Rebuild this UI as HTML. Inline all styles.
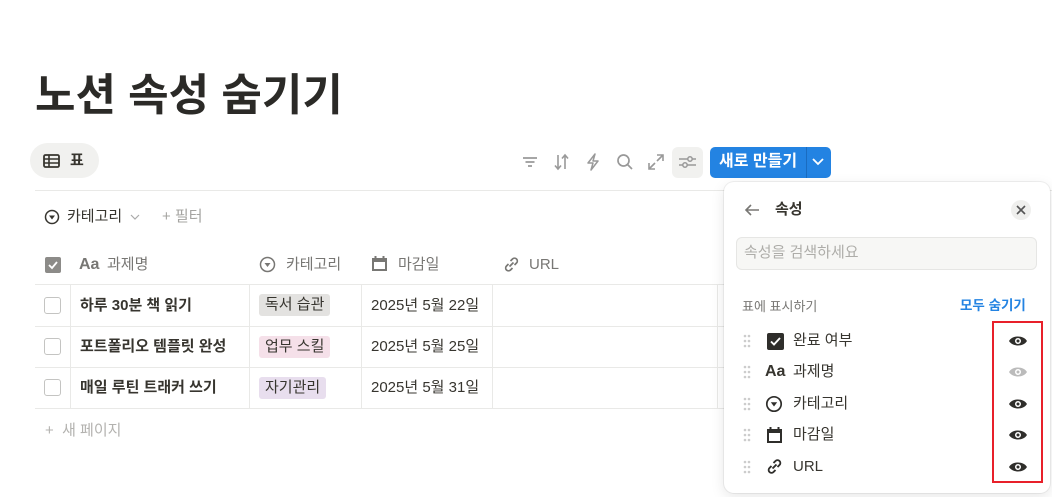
<!DOCTYPE html>
<html><head><meta charset="utf-8"><style>
*{margin:0;padding:0;box-sizing:border-box}
body{width:1052px;height:497px;overflow:hidden;background:#fff;font-family:"Liberation Sans","Noto Sans CJK KR",sans-serif;color:#37352f;position:relative}
.a{position:absolute}
.t{font-size:15px;line-height:20px;white-space:nowrap}
.g{color:#787774}
.vl{position:absolute;width:1px;background:#e9e9e7}
.hl{position:absolute;height:1px;background:#e9e9e7}
.cb{position:absolute;width:17px;height:17px;border:1.5px solid #c4c4c2;border-radius:3px;left:44px}
.tag{position:absolute;height:22px;padding:0 6px;border-radius:3px;font-size:15px;line-height:22px}
.eye{position:absolute;left:1008px}
</style></head><body>
<div class="a" style="left:35px;top:66px;font-size:44px;font-weight:700;line-height:60px;color:#2b2a27">노션 속성 숨기기</div>

<div class="a" style="left:30px;top:143px;width:69px;height:35px;border-radius:18px;background:#f1f1ef"></div>
<svg class="a" style="left:43px;top:154px" width="17" height="14" viewBox="0 0 17 14"><rect x="1" y="1" width="15" height="12" rx="1.5" fill="none" stroke="#37352f" stroke-width="1.8"/><path d="M1 5h15M1 9h15M6 1v12" stroke="#37352f" stroke-width="1.6"/></svg>
<div class="a t" style="left:70px;top:151px;font-weight:700">표</div>

<!-- toolbar -->
<svg class="a" style="left:521px;top:154px" width="18" height="16"><path d="M2 4h14M4.5 8h9M7 12h4" stroke="#999" stroke-width="1.7"/></svg>
<svg class="a" style="left:553px;top:153px" width="18" height="18"><path d="M5 2v14M2 12.5l3 3.5 3-3.5M12 16V2M9 5.5L12 2l3 3.5" stroke="#999" stroke-width="1.6" fill="none"/></svg>
<svg class="a" style="left:585px;top:153px" width="16" height="18"><path d="M10 1L3 10h5l-2 7 7-9H8z" stroke="#999" stroke-width="1.5" fill="none" stroke-linejoin="round"/></svg>
<svg class="a" style="left:616px;top:153px" width="18" height="18"><circle cx="7.5" cy="7.5" r="5.5" stroke="#999" stroke-width="1.7" fill="none"/><path d="M11.5 11.5l4.5 4.5" stroke="#999" stroke-width="1.7"/></svg>
<svg class="a" style="left:647px;top:153px" width="18" height="18"><path d="M2 16l6-6M2 10v6h6M16 2l-6 6M10 2h6v6" stroke="#999" stroke-width="1.6" fill="none"/></svg>
<div class="a" style="left:672px;top:147px;width:31px;height:31px;border-radius:6px;background:#f1f1ef"></div>
<svg class="a" style="left:678px;top:153px" width="19" height="18"><path d="M1 6h17M1 12h17" stroke="#999" stroke-width="1.5"/><circle cx="12" cy="6" r="2.2" fill="#f1f1ef" stroke="#999" stroke-width="1.5"/><circle cx="7" cy="12" r="2.2" fill="#f1f1ef" stroke="#999" stroke-width="1.5"/></svg>
<div class="a" style="left:710px;top:147px;width:121px;height:31px;border-radius:5px;background:#2383e2"></div>
<div class="a" style="left:806px;top:147px;width:1px;height:31px;background:#1a6cc0"></div>
<div class="a t" style="left:719px;top:152px;color:#fff;font-weight:700;font-size:16px">새로 만들기</div>
<svg class="a" style="left:811px;top:157px" width="14" height="10"><path d="M2 2l5 5 5-5" stroke="#fff" stroke-width="1.8" fill="none"/></svg>

<div class="hl" style="left:35px;top:190px;width:1017px"></div>

<!-- filter row -->
<svg class="a" style="left:44px;top:209px" width="16" height="16"><circle cx="8" cy="8" r="6.5" stroke="#37352f" stroke-width="1.5" fill="none"/><path d="M5 6.5h6L8 10.5z" fill="#37352f"/></svg>
<div class="a t" style="left:67px;top:207px">카테고리</div>
<svg class="a" style="left:130px;top:213px" width="10" height="8"><path d="M1 2l4 4 4-4" stroke="#aaa" stroke-width="1.2" fill="none"/></svg>
<div class="a t" style="left:162px;top:207px;color:#a5a4a1">+ 필터</div>

<!-- header -->
<div class="a" style="left:45px;top:257px;width:16px;height:16px;background:#8c8b88;border-radius:2px"></div>
<svg class="a" style="left:45px;top:257px" width="16" height="16"><path d="M4 8l3 3 5-6" stroke="#fff" stroke-width="1.8" fill="none"/></svg>
<div class="a t g" style="left:79px;top:255px;font-weight:700;font-size:16px">Aa</div>
<div class="a t g" style="left:107px;top:255px">과제명</div>
<svg class="a" style="left:259px;top:256px" width="17" height="17"><circle cx="8.5" cy="8.5" r="7" stroke="#787774" stroke-width="1.5" fill="none"/><path d="M5.5 7h6l-3 4z" fill="#787774"/></svg>
<div class="a t g" style="left:286px;top:255px">카테고리</div>
<svg class="a" style="left:371px;top:255px" width="17" height="17"><rect x="1" y="3" width="15" height="13" fill="#787774"/><rect x="3" y="7" width="11" height="7" fill="#fff"/><path d="M4.5 1v3M12.5 1v3" stroke="#787774" stroke-width="2"/></svg>
<div class="a t g" style="left:398px;top:255px">마감일</div>
<svg class="a" style="left:502px;top:255px" width="19" height="19"><path d="M7.5 11.5l4-4M6.5 9l-2 2a2.8 2.8 0 004 4l2-2M12.5 10l2-2a2.8 2.8 0 00-4-4l-2 2" stroke="#787774" stroke-width="1.7" fill="none"/></svg>
<div class="a t g" style="left:529px;top:255px">URL</div>

<div class="hl" style="left:35px;top:284px;width:690px"></div>
<div class="hl" style="left:35px;top:326px;width:690px"></div>
<div class="hl" style="left:35px;top:367px;width:690px"></div>
<div class="hl" style="left:35px;top:408px;width:690px"></div>
<div class="vl" style="left:70px;top:285px;height:123px"></div>
<div class="vl" style="left:249px;top:285px;height:123px"></div>
<div class="vl" style="left:361px;top:285px;height:123px"></div>
<div class="vl" style="left:492px;top:285px;height:123px"></div>
<div class="vl" style="left:717px;top:285px;height:123px"></div>

<div class="cb" style="top:297px"></div>
<div class="cb" style="top:338px"></div>
<div class="cb" style="top:379px"></div>
<div class="a t" style="left:80px;top:296px;font-weight:700">하루 30분 책 읽기</div>
<div class="a t" style="left:80px;top:337px;font-weight:700">포트폴리오 템플릿 완성</div>
<div class="a t" style="left:80px;top:378px;font-weight:700">매일 루틴 트래커 쓰기</div>
<div class="tag" style="left:259px;top:294px;background:#e3e2e0">독서 습관</div>
<div class="tag" style="left:259px;top:336px;background:#f5e0e9">업무 스킬</div>
<div class="tag" style="left:259px;top:377px;background:#e8deee">자기관리</div>
<div class="a t" style="left:371px;top:296px">2025년 5월 22일</div>
<div class="a t" style="left:371px;top:337px">2025년 5월 25일</div>
<div class="a t" style="left:371px;top:378px">2025년 5월 31일</div>
<div class="a t" style="left:45px;top:421px;color:#b3b2af">+&nbsp; 새 페이지</div>

<!-- panel -->
<div class="a" style="left:724px;top:182px;width:326px;height:311px;background:#fff;border-radius:10px;box-shadow:0 0 0 1px rgba(15,15,15,.06),0 4px 14px rgba(15,15,15,.1)"></div>
<svg class="a" style="left:744px;top:202px" width="16" height="16"><path d="M15 8H2M7 3L2 8l5 5" stroke="#787774" stroke-width="1.6" fill="none"/></svg>
<div class="a t" style="left:775px;top:200px;font-weight:700">속성</div>
<div class="a" style="left:1011px;top:200px;width:20px;height:20px;border-radius:10px;background:#efefed"></div>
<svg class="a" style="left:1016px;top:205px" width="10" height="10"><path d="M1 1l8 8M9 1l-8 8" stroke="#555" stroke-width="1.6"/></svg>
<div class="a" style="left:736px;top:237px;width:301px;height:33px;border-radius:6px;background:#f7f7f5;border:1px solid #e6e6e4"></div>
<div class="a t" style="left:744px;top:243px;color:#aeada9">속성을 검색하세요</div>
<div class="a" style="left:742px;top:298px;font-size:13px;line-height:18px;color:#787774">표에 표시하기</div>
<div class="a" style="left:960px;top:297px;font-size:13.5px;line-height:18px;color:#2383e2;font-weight:700">모두 숨기기</div>

<!-- items -->
<svg class="a" style="left:743px;top:334px" width="8" height="150"><g fill="#ccc">
<circle cx="2" cy="2" r="1.3"/><circle cx="6" cy="2" r="1.3"/><circle cx="2" cy="7" r="1.3"/><circle cx="6" cy="7" r="1.3"/><circle cx="2" cy="12" r="1.3"/><circle cx="6" cy="12" r="1.3"/>
<circle cx="2" cy="33" r="1.3"/><circle cx="6" cy="33" r="1.3"/><circle cx="2" cy="38" r="1.3"/><circle cx="6" cy="38" r="1.3"/><circle cx="2" cy="43" r="1.3"/><circle cx="6" cy="43" r="1.3"/>
<circle cx="2" cy="65" r="1.3"/><circle cx="6" cy="65" r="1.3"/><circle cx="2" cy="70" r="1.3"/><circle cx="6" cy="70" r="1.3"/><circle cx="2" cy="75" r="1.3"/><circle cx="6" cy="75" r="1.3"/>
<circle cx="2" cy="96" r="1.3"/><circle cx="6" cy="96" r="1.3"/><circle cx="2" cy="101" r="1.3"/><circle cx="6" cy="101" r="1.3"/><circle cx="2" cy="106" r="1.3"/><circle cx="6" cy="106" r="1.3"/>
<circle cx="2" cy="128" r="1.3"/><circle cx="6" cy="128" r="1.3"/><circle cx="2" cy="133" r="1.3"/><circle cx="6" cy="133" r="1.3"/><circle cx="2" cy="138" r="1.3"/><circle cx="6" cy="138" r="1.3"/>
</g></svg>
<div class="a" style="left:767px;top:333px;width:17px;height:17px;background:#2f2e2b;border-radius:2px"></div>
<svg class="a" style="left:767px;top:333px" width="17" height="17"><path d="M4 8.5l3 3 6-6.5" stroke="#fff" stroke-width="1.9" fill="none"/></svg>
<div class="a t" style="left:793px;top:331px">완료 여부</div>
<div class="a t" style="left:765px;top:362px;font-weight:700;font-size:16px">Aa</div>
<div class="a t" style="left:793px;top:362px">과제명</div>
<svg class="a" style="left:765px;top:395px" width="18" height="18"><circle cx="9" cy="9" r="7.2" stroke="#2f2e2b" stroke-width="1.7" fill="none"/><path d="M5.8 7.3h6.4L9 11.5z" fill="#2f2e2b"/></svg>
<div class="a t" style="left:793px;top:394px">카테고리</div>
<svg class="a" style="left:766px;top:426px" width="17" height="18"><rect x="1" y="3" width="15" height="14" fill="#2f2e2b"/><rect x="3" y="7" width="11" height="8" fill="#fff"/><path d="M4.5 1v3M12.5 1v3" stroke="#2f2e2b" stroke-width="2"/></svg>
<div class="a t" style="left:793px;top:425px">마감일</div>
<svg class="a" style="left:765px;top:457px" width="19" height="19"><path d="M7.5 11.5l4-4M6.5 9l-2 2a2.8 2.8 0 004 4l2-2M12.5 10l2-2a2.8 2.8 0 00-4-4l-2 2" stroke="#2f2e2b" stroke-width="1.9" fill="none"/></svg>
<div class="a t" style="left:793px;top:457px">URL</div>

<svg class="eye" style="top:334px" width="20" height="14"><path d="M1 7C4.5 1 15.5 1 19 7 15.5 13 4.5 13 1 7z" fill="#2f2e2b"/><circle cx="10" cy="7" r="3" fill="#fff"/><circle cx="10" cy="7" r="1.5" fill="#2f2e2b"/></svg>
<svg class="eye" style="top:365px" width="20" height="14"><path d="M1 7C4.5 1 15.5 1 19 7 15.5 13 4.5 13 1 7z" fill="#bbb"/><circle cx="10" cy="7" r="3" fill="#fff"/><circle cx="10" cy="7" r="1.5" fill="#bbb"/></svg>
<svg class="eye" style="top:397px" width="20" height="14"><path d="M1 7C4.5 1 15.5 1 19 7 15.5 13 4.5 13 1 7z" fill="#2f2e2b"/><circle cx="10" cy="7" r="3" fill="#fff"/><circle cx="10" cy="7" r="1.5" fill="#2f2e2b"/></svg>
<svg class="eye" style="top:428px" width="20" height="14"><path d="M1 7C4.5 1 15.5 1 19 7 15.5 13 4.5 13 1 7z" fill="#2f2e2b"/><circle cx="10" cy="7" r="3" fill="#fff"/><circle cx="10" cy="7" r="1.5" fill="#2f2e2b"/></svg>
<svg class="eye" style="top:460px" width="20" height="14"><path d="M1 7C4.5 1 15.5 1 19 7 15.5 13 4.5 13 1 7z" fill="#2f2e2b"/><circle cx="10" cy="7" r="3" fill="#fff"/><circle cx="10" cy="7" r="1.5" fill="#2f2e2b"/></svg>

<div class="a" style="left:992px;top:321px;width:51px;height:162px;border:2.5px solid #e8202a"></div>
</body></html>
